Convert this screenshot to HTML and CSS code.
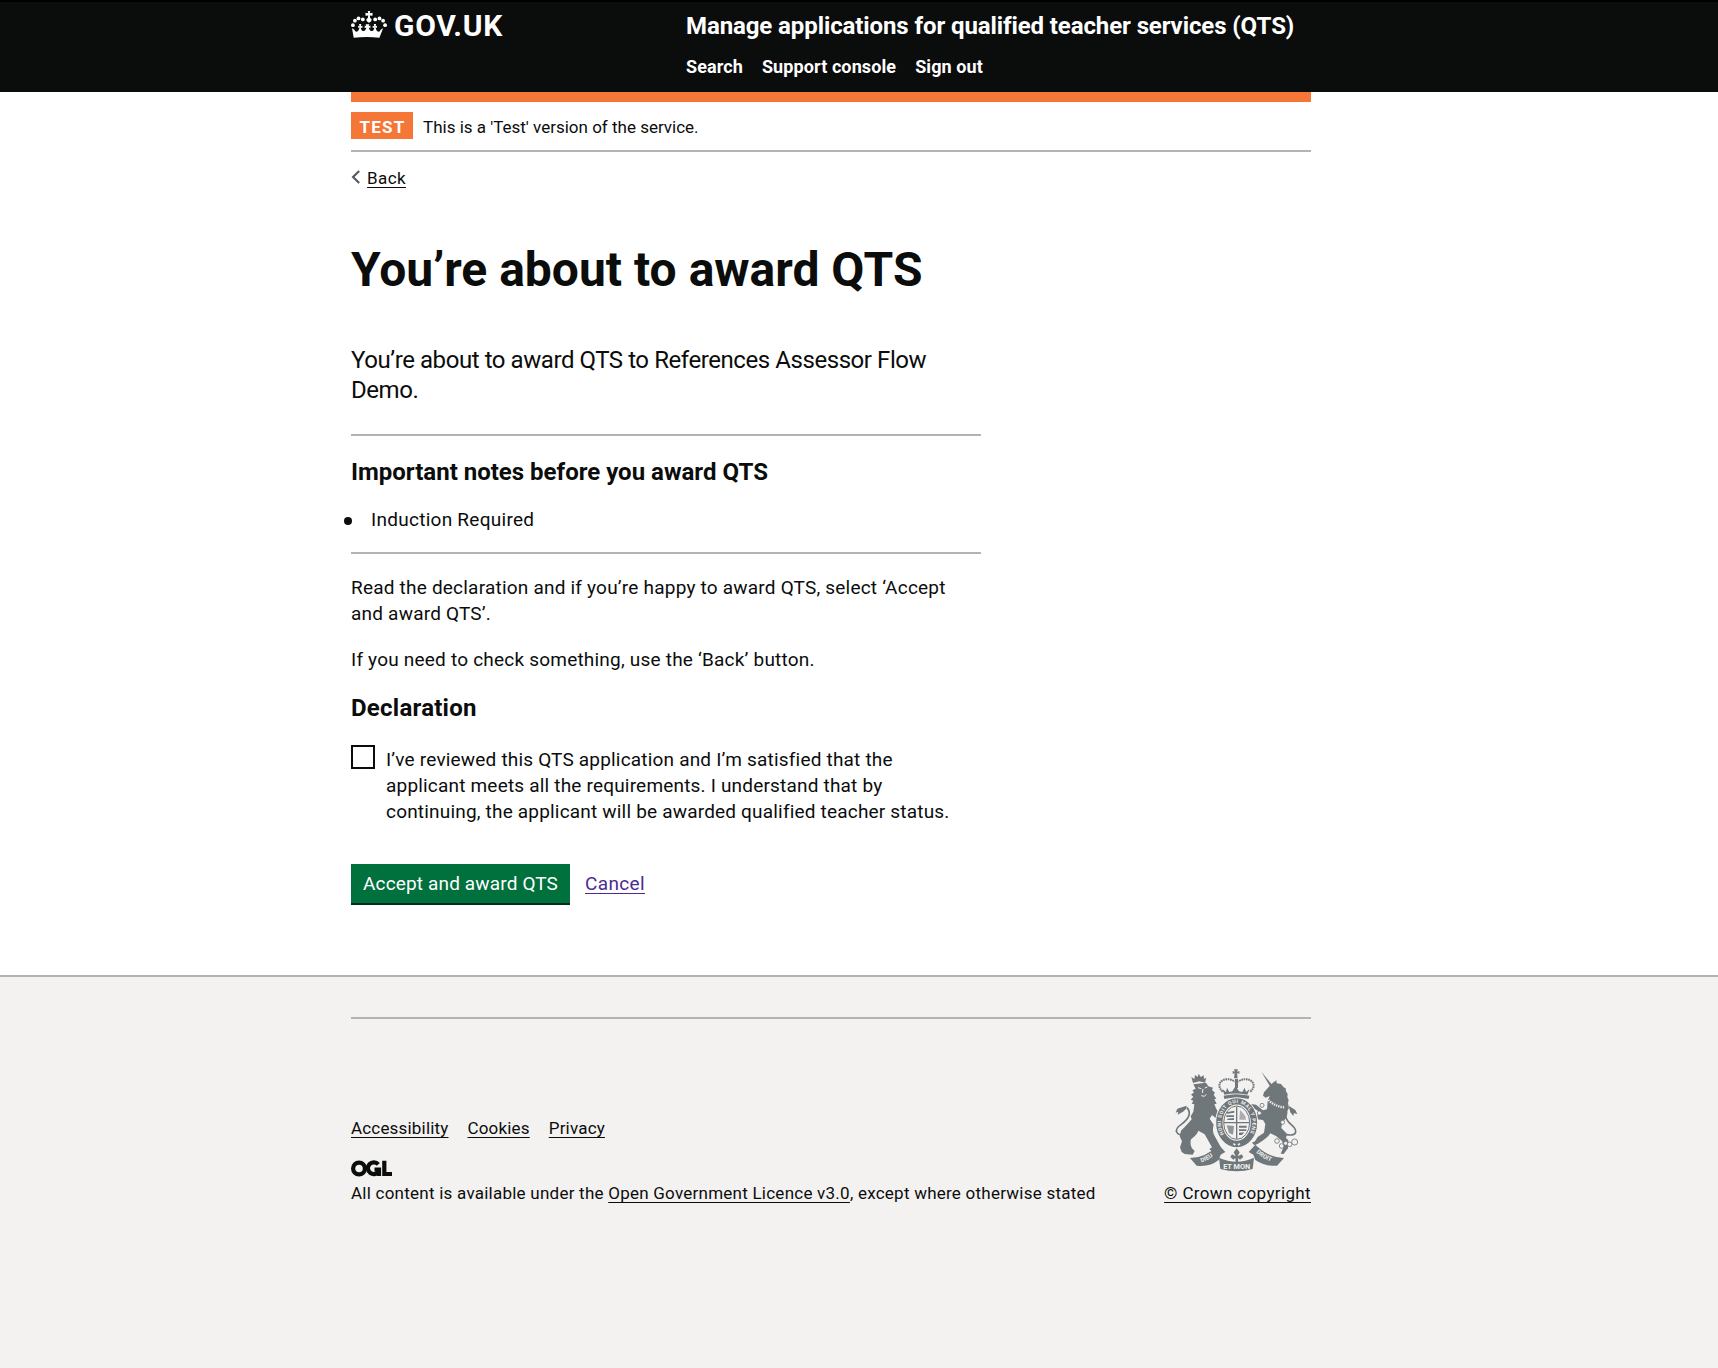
FILE: index.html
```html
<!DOCTYPE html>
<html lang="en">
<head>
<meta charset="utf-8">
<title>You’re about to award QTS</title>
<link rel="stylesheet" href="styles.css">
</head>
<body>
<header class="header">
  <div class="container header-inner">
    <a class="logo" href="#">
      <svg class="logo-crown" viewBox="0 0 36 27" width="36" height="27" aria-hidden="true">
        <g fill="#fff">
          <circle cx="1.9" cy="14.2" r="1.9"/><circle cx="3.9" cy="9.7" r="1.9"/><circle cx="7.5" cy="7.4" r="1.9"/><circle cx="11.8" cy="8.4" r="1.9"/>
          <circle cx="34.1" cy="14.2" r="1.9"/><circle cx="32.1" cy="9.7" r="1.9"/><circle cx="28.5" cy="7.4" r="1.9"/><circle cx="24.2" cy="8.4" r="1.9"/>
          <path d="M16.800 0h2.400l-.4 2.200 2.700-.4v3l-2.700-.4.4 2.600a2.400 2.400 0 1 1-2.400 0l.4-2.600-2.700.4v-3l2.700.4z"/>
          <path d="M1 17.200c1.200.3 2.400 1.500 3.100 2.700.600.800 1.600 1 2.600.300 1.100-.900 1.600-2.200 1.700-3.900l-1.300.6v-2.200l1.400.5-.5-2.200h2.300l-.5 2.200 1.600-.5v2.200l-1.600-.5c.1 1.800.7 3.200 2 3.500 1.400.3 2.500-.6 3.100-2 .2-.5.300-1 .300-1.500l-1.500.8v-2.600l1.600.7-.7-2h3.800l-.7 2 1.700-.7v2.600l-1.500-.8c0 .5.100 1 .3 1.500.6 1.400 1.700 2.300 3.100 2 1.300-.3 1.900-1.700 2-3.500l-1.600.5v-2.200l1.600.5-.5-2.200h2.300l-.5 2.200 1.400-.5v2.200l-1.300-.6c.1 1.700.6 3 1.700 3.900 1 .7 2 .5 2.600-.3.700-1.200 1.900-2.400 3.100-2.700l-3.700 9.600c-8.400-1-17.300-1-25.700 0z"/>
        </g>
      </svg>
      <span>GOV.UK</span>
    </a>
    <div>
      <a class="service-name" href="#">Manage applications for qualified teacher services (QTS)</a>
      <nav class="nav"><a href="#">Search</a><a href="#">Support console</a><a href="#">Sign out</a></nav>
    </div>
  </div>
</header>
<div class="container">
  <div class="phase-banner"><strong class="tag">TEST</strong><span>This is a 'Test' version of the service.</span></div>
  <a class="back" href="#"><svg width="10" height="14" viewBox="0 0 10 14" aria-hidden="true"><path d="M8.200 1 2 7l6.200 6" fill="none" stroke="#505a5f" stroke-width="2.100"/></svg><span>Back</span></a>
  <main class="main">
    <h1>You’re about to award QTS</h1>
    <p class="lead">You’re about to award QTS to References Assessor Flow<br>Demo.</p>
    <hr>
    <h2>Important notes before you award QTS</h2>
    <ul><li>Induction Required</li></ul>
    <hr>
    <p>Read the declaration and if you’re happy to award QTS, select ‘Accept<br>and award QTS’.</p>
    <p>If you need to check something, use the ‘Back’ button.</p>
    <h2>Declaration</h2>
    <label class="checkbox"><input type="checkbox"><span>I’ve reviewed this QTS application and I’m satisfied that the<br>applicant meets all the requirements. I understand that by<br>continuing, the applicant will be awarded qualified teacher status.</span></label>
    <div class="actions"><button type="button">Accept and award QTS</button><a href="#">Cancel</a></div>
  </main>
</div>
<footer class="footer">
  <div class="container">
    <hr>
    <div class="meta">
      <div>
        <div class="footer-links"><a href="#">Accessibility</a><a href="#">Cookies</a><a href="#">Privacy</a></div>
        <svg class="ogl" viewBox="0 0 41 17" width="41" height="17" aria-label="Open Government Licence">
          <g fill="none" stroke="#0b0c0c" stroke-width="4.200">
            <circle cx="8" cy="8.500" r="5.900"/>
            <path d="M27.300 4.400A5.900 5.900 0 1 0 28 11"/>
            <path d="M23.500 9.600H28V16"/>
            <path d="M33.300 .8V14H41"/>
          </g>
        </svg>
        <p>All content is available under the <a href="#">Open Government Licence v3.0</a>, except where otherwise stated</p>
      </div>
      <a class="copyright" href="#">
        <svg viewBox="0 0 405 336" width="135" height="112" aria-hidden="true">
          <defs>
            <path id="garter" d="M162 207.700A47 59 0 1 1 238 207.700"/>
            <path id="dieu" d="M87 295Q120 285 148 258"/>
            <path id="droit" d="M254 258Q282 285 318 296"/>
          </defs>
          <g fill="#6f777b">
            <!-- lion with its crown -->
            <path d="M69 54l-5-18 9 6 2-12 8 6 3-10 6 10 9-5 1 11 7-4-4 15-17-4z"/>
            <path d="M70 58l38-5 7 11 14 4-3 7 9 8-4 6 8 12-6 2 7 13-7 2 5 12c5 10 10 17 14 27l-8 8-18-15-7 11 12 18c-3 11-4 22 3 34l12 22 8 15-9 11-20-2-7-7 8-5-22-39-19-11c-4 13-16 20-22 26-3 11-1 19 3 27l8 8-6 11-24-2-9-6-5-14 6-18-7-15 4-17 14-14 18-20-3-9 8-14 3-22-8-2 5-9-8-3 8-9-7-6 9-7-5-6 10-5z"/>
            <!-- unicorn -->
            <path d="M274 20l32 39-6 5z"/>
            <path d="M305 56l14-10 1 9 13 2 8 10 6 3 1 9 5 8-1 10 4 8-2 10 2 9-4 14c2 10-3 24-15 34l-3 17 17 18-3 12 7 7-1 24-13 17-9-1 9-21-5-17-18-15-17-8c-7 11-19 21-37 31l-11 5-7-8 9-4 8-13 19-13 4-26-7-12-18-2-18-12-2 19-9-9 5-17 13-3 12 9 14-4-22-15-12 5-8-11 9-8 15 2 21 17 12-3 2-25 6-15-12 5-8-6 3-10z"/>
            <!-- crown above the shield -->
            <path d="M194 24l-6 3v-9l6 2-2-7h12l-3 7 7-2v9l-7-3 2 16h-11z"/>
            <path d="M161 92q38-9 77 0l-2 10q-37-8-73 0z"/>
            <path d="M163 89l-6-17 11 9 3-13 7 13 9-2 10-16 10 16 10 2 7-13 4 13 11-9-7 17q-35-7-69 0z"/>
            <path d="M195 42h9v27h-9z"/>
          </g>
          <ellipse cx="200" cy="173" rx="62" ry="74" fill="#f3f2f1" stroke="#f3f2f1" stroke-width="5"/>
          <g fill="none" stroke="#6f777b">
            <path d="M158 80C130 54 168 30 194 50M241 80C269 54 231 30 205 50" stroke-width="6" stroke-dasharray="5 2"/>
            <!-- tails -->
            <path d="M54 209C15 215 10 194 34 178C60 160 64 141 50 127" stroke-width="5"/>
            <path d="M348 209C386 215 382 194 363 178C342 160 342 141 356 127" stroke-width="5"/>
            <!-- garter -->
            <ellipse cx="200" cy="173" rx="52" ry="64" stroke-width="19"/>
            <ellipse cx="200" cy="173" rx="39" ry="50" stroke-width="3"/>
            <path d="M200 125v96M162 173h76" stroke-width="4"/>
          </g>
          <g fill="#6f777b">
            <!-- quarters of the shield -->
            <path d="M169 142l24-5v6l-21 3zM169 151h23v5h-23zM172 161l20-2v6h-20zM207 182h23v6h-23zM207 193h22v5h-22zM207 203l16-1-7 8h-9z"/>
            <path d="M208 164l2-29 9 9 7 10 2 10z" opacity=".55"/>
            <path d="M170 181l22 2-3 26-12-5z" opacity=".75"/>
            <!-- tail tips -->
            <path d="M50 122l-28 9-5 12 8-3-2 9 16-9 9-8z"/>
            <path d="M356 122l20 13 6 13-10-4-2 9-9-11z"/>
            <!-- ribbon -->
            <path d="M60 279q46 0 86-40l20 22-14 8-6 16q-27 22-66 17z"/>
            <path d="M342 279q-45 0-86-40l-20 22 14 8 6 16q28 20 65 17z"/>
            <path d="M147 278q53 24 105 0l-4 34q-48 14-97 0z"/>
            <path d="M200 250l9 12-6 12 12-6 5 8-10 8-5-5-1 15h-7l-1-15-6 5-9-8 5-8 11 6-6-12z"/>
          </g>
          <g fill="none" stroke="#f3f2f1" stroke-width="3">
            <path d="M84 68l10 3m10-2 8-3M94 92l9 2 6-6M99 72l-2 12"/>
            <path d="M295 105q21 20 48 22" stroke-width="7" stroke-dasharray="4 3"/>
            <path d="M190 236l6 4M204 240l6-4" stroke-width="5"/>
          </g>
          <g fill="#f3f2f1" stroke="#6f777b" stroke-width="2.500">
            <circle cx="276" cy="121" r="6"/><circle cx="268" cy="144" r="6"/><circle cx="338" cy="172" r="6"/><circle cx="321" cy="228" r="7"/><circle cx="335" cy="243" r="7"/><circle cx="347" cy="235" r="6"/><circle cx="359" cy="238" r="7"/><circle cx="374" cy="231" r="9"/>
          </g>
          <g class="motto">
            <text font-size="15"><textPath href="#garter" textLength="245">HONI SOIT QUI MAL Y PENSE</textPath></text>
            <text font-size="18"><textPath href="#dieu" startOffset="8">DIEU</textPath></text>
            <text font-size="18"><textPath href="#droit" startOffset="6">DROIT</textPath></text>
            <text x="200" y="311" font-size="22" text-anchor="middle">ET MON</text>
          </g>
        </svg>
        <span>© Crown copyright</span>
      </a>
    </div>
  </div>
</footer>
</body>
</html>
```
FILE: styles.css
```css
* { box-sizing: border-box; }
body { margin: 0; min-height: 1368px; display: flex; flex-direction: column; background: #fff; color: #0b0c0c; font: 19px/26px Roboto, "Liberation Sans", sans-serif; letter-spacing: .21px; }
a { color: inherit; text-decoration-thickness: 1px; text-underline-offset: 3px; text-decoration-skip-ink: none; }
h1, h2, p, ul, hr { margin: 0; }
hr { height: 2px; border: 0; background: #b1b4b6; }
.container { width: 960px; margin-left: 351px; }

.header { height: 92px; background: #0b0c0c; border-top: 2px solid #000; color: #fff; font-weight: 700; }
.header a { text-decoration: none; }
.header-inner { display: grid; grid-template-columns: 335px 1fr; padding-top: 9px; }
.logo { display: flex; gap: 7px; height: 30px; font-size: 30px; line-height: 30px; letter-spacing: .7px; }
.service-name { display: block; font-size: 24px; line-height: 30px; letter-spacing: -.1px; white-space: nowrap; }
.nav { display: flex; gap: 19px; margin-top: 16px; font-size: 18px; line-height: 20px; letter-spacing: .1px; }

.phase-banner { display: flex; align-items: flex-start; gap: 10px; height: 60px; padding-top: 10px; border-top: 10px solid #f47738; border-bottom: 2px solid #b1b4b6; font-size: 17px; line-height: 30px; letter-spacing: 0; }
.tag { width: 62px; height: 27px; padding-left: 1px; background: #f47738; color: #fff; letter-spacing: 1.200px; text-align: center; }
.back { display: flex; align-items: center; gap: 6px; width: max-content; height: 20px; margin-top: 16px; font-size: 17px; line-height: 20px; letter-spacing: .4px; text-decoration: none; }
.back svg { margin-top: -2px; }
.back span { text-decoration: underline 1px; text-underline-offset: 3px; }

.main { width: 630px; padding-top: 57px; }
h1 { font-size: 48px; line-height: 50px; letter-spacing: 0; }
h2 { margin: 21px 0 20px; font-size: 24px; line-height: 30px; letter-spacing: 0; }
.lead { margin: 50px 0 29px; font-size: 24px; line-height: 30px; letter-spacing: -.43px; }
ul { margin-bottom: 19px; padding-left: 20px; list-style: none; }
li { display: flex; align-items: center; letter-spacing: .27px; }
li::before { content: ""; width: 8px; height: 8px; margin: 2px 19px 0 -27px; border-radius: 50%; background: #0b0c0c; }
hr + p { margin-top: 21px; }
p + p { margin-top: 20px; }
p + h2 { margin: 20px 0 22px; letter-spacing: .25px; }
.checkbox { display: flex; align-items: flex-start; gap: 11px; }
.checkbox input { appearance: none; width: 24px; height: 24px; margin: 0; border: 2px solid #0b0c0c; background: #fff; }
.checkbox span { padding-top: 2px; letter-spacing: .19px; }
.actions { display: flex; gap: 15px; margin-top: 39px; }
.actions button { width: 219px; height: 39px; padding: 0; border: 0; background: #00703c; box-shadow: 0 2px 0 #002d18; color: #fff; font: inherit; letter-spacing: .15px; }
.actions a { padding-top: 7px; color: #4c2c92; letter-spacing: .36px; }

.footer { flex: 1; margin-top: 72px; padding-top: 40px; border-top: 2px solid #b1b4b6; background: #f3f2f1; font-size: 17px; line-height: 20px; letter-spacing: .24px; }
.meta { display: flex; justify-content: space-between; align-items: flex-end; padding-top: 46px; }
.footer-links { display: flex; gap: 19px; letter-spacing: .18px; }
.ogl { display: block; margin: 22px 0 6px; }
.copyright { display: flex; flex-direction: column; align-items: flex-end; gap: 6px; letter-spacing: .36px; }
.copyright svg { margin-right: 6px; }
.motto { fill: #f3f2f1; font-weight: 700; letter-spacing: 0; }
```
